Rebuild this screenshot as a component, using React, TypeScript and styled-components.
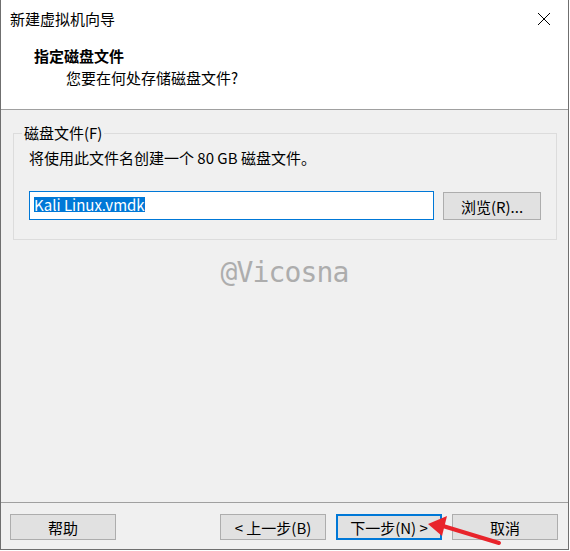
import { createGlobalStyle } from 'styled-components'
import styled from 'styled-components'

const _border = '#a0a0a0'
const _panel = '#f0f0f0'
const _accent = '#0078d7'
const uiFont = `"Noto Sans CJK SC", "Noto Sans", sans-serif`

const GlobalStyle = createGlobalStyle`
  html, body {
    margin: 0;
    padding: 0;
    background: #ffffff;
  }
  body {
    font-family: ${uiFont};
    font-size: 15px;
    color: #000000;
  }
`

const Window = styled.div`
  display: flex;
  flex-direction: column;
  width: 569px;
  height: 550px;
  box-sizing: border-box;
  border: 1px solid #6f6f6f;
  border-top: none;
  background: ${_panel};
  position: relative;
  overflow: hidden;
`

const TitleBar = styled.div`
  display: flex;
  align-items: center;
  height: 38px;
  padding-left: 9px;
  background: #ffffff;
  line-height: 38px;
`

const TitleText = styled.span`
  flex: 1;
`

const CloseButton = styled.div`
  display: flex;
  align-items: center;
  justify-content: center;
  width: 46px;
  height: 38px;
  margin-right: 1px;
`

const Header = styled.header`
  display: flex;
  flex-direction: column;
  height: 72px;
  box-sizing: border-box;
  padding-top: 7px;
  background: #ffffff;
  border-bottom: 1px solid ${_border};

  h1 {
    margin: 0 0 0 33px;
    font-size: 15px;
    font-weight: bold;
    line-height: 22px;
  }
  p {
    margin: 0 0 0 65px;
    line-height: 22px;
  }
`

const Body = styled.main`
  flex: 1;
  display: flex;
  flex-direction: column;
  padding-top: 14px;
`

const GroupBox = styled.fieldset`
  margin: 0 11px 0 12px;
  padding: 6px 15px 19px;
  border: 1px solid #dcdcdc;

  legend {
    padding: 0 2px;
    margin-left: -7px;
    line-height: 18px;
  }
`

const Description = styled.div`
  line-height: 20px;
  margin-bottom: 23px;
`

const FieldRow = styled.div`
  display: flex;
  align-items: flex-end;
  gap: 9px;
`

const TextField = styled.div`
  flex: 1;
  height: 29px;
  box-sizing: border-box;
  border: 1px solid ${_accent};
  background: #ffffff;
  display: flex;
  align-items: center;
  padding: 0 4px;
`

const Selected = styled.span`
  background: ${_accent};
  color: #ffffff;
  line-height: 15px;
  height: 15px;
  margin-top: -2px;
`

const Button = styled.button<{ $default?: boolean; $width?: number }>`
  width: ${(p) => p.$width ?? 106}px;
  height: ${(p) => (p.$width ? 28 : 26)}px;
  box-sizing: border-box;
  padding: 0;
  font-family: ${uiFont};
  font-size: 15px;
  line-height: 1;
  color: #000000;
  background: #e1e1e1;
  border: ${(p) => (p.$default ? `2px solid ${_accent}` : '1px solid #adadad')};
`

const Watermark = styled.div`
  margin-top: 16px;
  text-align: center;
  font-family: "DejaVu Sans Mono", monospace;
  font-size: 28px;
  letter-spacing: -0.85px;
  line-height: 34px;
  color: #adadad;
`

const Footer = styled.footer`
  display: flex;
  align-items: flex-start;
  height: 47px;
  box-sizing: border-box;
  padding: 11px 10px 0 9px;
  border-top: 1px solid ${_border};
`

const NavButtons = styled.div`
  display: flex;
  gap: 10px;
  margin-left: auto;
`

const Arrow = styled.svg`
  position: absolute;
  left: 420px;
  top: 510px;
  pointer-events: none;
`

const CloseIcon = () => (
  <svg width="14" height="14" viewBox="0 0 14 14">
    <path d="M1 1 L13 13 M13 1 L1 13" stroke="#000" strokeWidth="1" fill="none" />
  </svg>
)

export default function App() {
  return (
    <>
      <GlobalStyle />
      <Window>
        <TitleBar>
          <TitleText>新建虚拟机向导</TitleText>
          <CloseButton>
            <CloseIcon />
          </CloseButton>
        </TitleBar>
        <Header>
          <h1>指定磁盘文件</h1>
          <p>您要在何处存储磁盘文件?</p>
        </Header>
        <Body>
          <GroupBox>
            <legend>磁盘文件(F)</legend>
            <Description>将使用此文件名创建一个 80 GB 磁盘文件。</Description>
            <FieldRow>
              <TextField>
                <Selected>Kali Linux.vmdk</Selected>
              </TextField>
              <Button $width={98}>浏览(R)...</Button>
            </FieldRow>
          </GroupBox>
          <Watermark>@Vicosna</Watermark>
        </Body>
        <Footer>
          <Button>帮助</Button>
          <NavButtons>
            <Button>&lt; 上一步(B)</Button>
            <Button $default>下一步(N) &gt;</Button>
            <Button>取消</Button>
          </NavButtons>
        </Footer>
        <Arrow width="90" height="41" viewBox="0 0 90 41">
          <path d="M22 16 L78 33" stroke="#e8242b" strokeWidth="4" strokeLinecap="round" />
          <polygon points="7,14 26,6 21,26" fill="#e8242b" />
        </Arrow>
      </Window>
    </>
  )
}
